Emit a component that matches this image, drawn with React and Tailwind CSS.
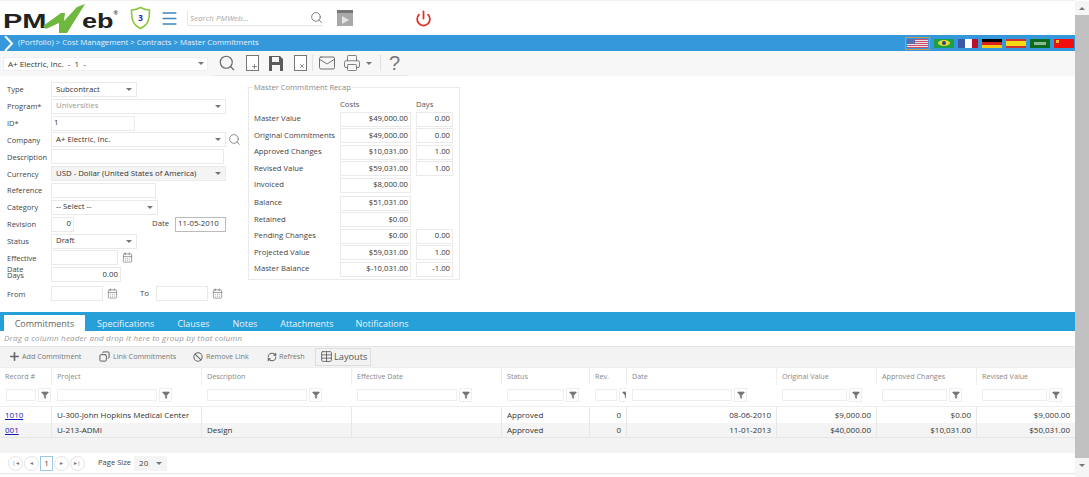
import { Search, Menu, Power, Plus, Filter, CalendarDays, X, RefreshCw, Ban, Table, Copy, Mail, Printer } from 'lucide-react'

const font = 'font-["Open_Sans","Noto_Sans",sans-serif]'

function Caret({ className = '' }) {
    return <span className={'inline-block border-x-[3px] border-t-[3px] border-x-transparent border-t-[#777] ' + className}></span>
}

function Select({ value, width, muted, bg = 'bg-white' }) {
    return (
        <div style={{ width }} className={'h-[15px] flex items-center justify-between pl-[4px] pr-[4px] border border-[#eaeaea] whitespace-nowrap ' + bg}>
            <span className={muted ? 'text-[#999]' : 'text-[#333]'}>{value}</span>
            <Caret className="shrink-0" />
        </div>
    )
}

function Input({ value, width, right, dark }) {
    return (
        <div style={{ width }} className={'h-[15px] flex items-center px-[2px] border ' + (dark ? 'border-[#bbb] ' : 'border-[#eaeaea] ') + (right ? 'justify-end' : '')}>
            <span className="text-[#333]">{value}</span>
        </div>
    )
}

function Row({ label, children }) {
    return (
        <div className="h-[16.85px] flex items-center">
            <div className="w-[51px] shrink-0 pl-[7px] text-[7.5px] leading-[6px] text-[#444]">{label}</div>
            {children}
        </div>
    )
}

function Cal() {
    return <CalendarDays size={11} strokeWidth={1.5} className="text-[#777]" />
}

function FormPanel() {
    return (
        <div className="w-[248px] shrink-0 pt-[5px] text-[7.8px]">
            <Row label="Type"><Select value="Subcontract" width={86} /></Row>
            <Row label="Program*"><Select value="Universities" width={175} muted /></Row>
            <Row label="ID*"><Input value="1" width={84} /></Row>
            <Row label="Company">
                <Select value="A+ Electric, Inc." width={175} />
                <Search size={13} strokeWidth={1.5} className="ml-[2px] text-[#777]" />
            </Row>
            <Row label="Description"><Input width={173} /></Row>
            <Row label="Currency"><Select value="USD - Dollar (United States of America)" width={175} bg="bg-[#f4f4f4]" /></Row>
            <Row label="Reference"><Input width={105} /></Row>
            <Row label="Category"><Select value="-- Select --" width={107} /></Row>
            <Row label="Revision">
                <Input value="0" width={23} right />
                <span className="ml-[78px] w-[23px] text-[#444]">Date</span>
                <Input value="11-05-2010" width={51} dark />
            </Row>
            <Row label="Status"><Select value="Draft" width={86} /></Row>
            <Row label="Effective">
                <Input width={67} />
                <span className="ml-[4px]"><Cal /></span>
            </Row>
            <Row label={<span className="block mb-[6px]">Date<br />Days</span>}><Input value="0.00" width={70} right /></Row>
            <div className="h-[2px]"></div>
            <Row label="From">
                <Input width={52} />
                <span className="ml-[4px]"><Cal /></span>
                <span className="ml-[22px] w-[16px] text-[#444]">To</span>
                <Input width={52} />
                <span className="ml-[4px]"><Cal /></span>
            </Row>
        </div>
    )
}

const recap = [
    ['Master Value', '$49,000.00', '0.00'],
    ['Original Commitments', '$49,000.00', '0.00'],
    ['Approved Changes', '$10,031.00', '1.00'],
    ['Revised Value', '$59,031.00', '1.00'],
    ['Invoiced', '$8,000.00', null, 'mb-[1.5px]'],
    ['Balance', '$51,031.00', null],
    ['Retained', '$0.00', null],
    ['Pending Changes', '$0.00', '0.00'],
    ['Projected Value', '$59,031.00', '1.00'],
    ['Master Balance', '$-10,031.00', '-1.00'],
]

function RecapPanel() {
    return (
        <div className="relative mt-[11px] w-[212px] h-[193px] border border-[#eaeaea] pl-[5px] pt-[11px] text-[7.7px]">
            <span className="absolute left-[4px] top-[-4px] bg-white px-[1px] text-[7.6px] text-[#888]">Master Commitment Recap</span>
            <div className="flex h-[12px] items-center text-[#555]">
                <span className="w-[86px]"></span>
                <span className="w-[76px]">Costs</span>
                <span>Days</span>
            </div>
            {recap.map((r, i) => (
                <div key={i} className={'flex h-[16.5px] items-center ' + (r[3] || '')}>
                    <span className="w-[86px] text-[#444] whitespace-nowrap">{r[0]}</span>
                    <Input value={r[1]} width={71} right />
                    {r[2] && <span className="ml-[5px]"><Input value={r[2]} width={37} right /></span>}
                </div>
            ))}
        </div>
    )
}

const cols = 'grid grid-cols-[51px_150px_150px_150px_88px_37px_150px_100px_100px_99px]'
const headers = ['Record #', 'Project', 'Description', 'Effective Date', 'Status', 'Rev.', 'Date', 'Original Value', 'Approved Changes', 'Revised Value']
const filterWidths = [30, 100, 100, 100, 57, 22, 100, 65, 65, 65]
const rows = [
    ['1010', 'U-300-John Hopkins Medical Center', '', '', 'Approved', '0', '08-06-2010', '$9,000.00', '$0.00', '$9,000.00'],
    ['001', 'U-213-ADMI', 'Design', '', 'Approved', '0', '11-01-2013', '$40,000.00', '$10,031.00', '$50,031.00'],
]

function Grid() {
    return (
        <div>
            <div className={cols + ' h-[18px] items-stretch border-t border-[#eee]'}>
                {headers.map((h) => (
                    <div key={h} className="pl-[5px] flex items-center text-[7.2px] text-[#888] border-l border-[#eee] first:border-l-0 whitespace-nowrap">{h}</div>
                ))}
            </div>
            <div className={cols + ' h-[22px] pb-[2px] border-b border-[#eee]'}>
                {filterWidths.map((w, i) => (
                    <div key={i} className="pl-[6px] flex items-center gap-[2px] overflow-hidden">
                        <div style={{ width: w }} className="h-[12px] border border-[#eee] shrink-0"></div>
                        <div className="w-[13px] h-[14px] border border-[#eee] flex items-center justify-center shrink-0">
                            <Filter size={8} fill="#777" className="text-[#777]" />
                        </div>
                    </div>
                ))}
            </div>
            {rows.map((r, ri) => (
                <div key={ri} className={cols + (ri === 0 ? ' h-[16px]' : ' h-[15px] bg-[#f4f4f4] border-b border-[#e6e6e6]')}>
                    {r.map((c, i) => (
                        <div key={i} className={'px-[5px] flex items-center whitespace-nowrap text-[#333] border-l border-[#e8e8e8] first:border-l-0 ' + (i >= 5 ? 'justify-end' : '')}>
                            {i === 0 ? <a className="text-[#1a1ab0] underline">{c}</a> : c}
                        </div>
                    ))}
                </div>
            ))}
            <div className="h-[15px] bg-[#f3f3f3]"></div>
        </div>
    )
}

function PageButton({ children }) {
    return <span className="w-[15px] h-[15px] rounded-full border border-[#e4e4e4] flex items-center justify-center text-[#777] text-[6px]">{children}</span>
}

function Pager() {
    return (
        <div className="h-[21px] flex items-center pl-[8px] border-b border-[#e6e6e6]">
            <PageButton>|◂</PageButton>
            <span className="ml-[1px]"><PageButton>◂</PageButton></span>
            <span className="mx-[1px] w-[13px] h-[15px] border border-[#9cc7e6] flex items-center justify-center text-[#444]">1</span>
            <PageButton>▸</PageButton>
            <span className="ml-[1px]"><PageButton>▸|</PageButton></span>
            <span className="ml-[13px] text-[7.6px] text-[#444]">Page Size</span>
            <div className="ml-[3px] w-[33px] h-[15px] bg-[#f4f4f4] flex items-center justify-between px-[5px] text-[#444]">
                20 <Caret />
            </div>
        </div>
    )
}

function GridToolbar() {
    return (
        <div className="h-[21px] flex items-center bg-[#f3f3f3] border-t border-[#e6e6e6] text-[#777] text-[7.2px] pl-[8px] pb-[1px]">
            <Plus size={13} strokeWidth={3} className="text-[#666]" />
            <span className="ml-[1px] w-[59px] whitespace-nowrap">Add Commitment</span>
            <Copy size={11} strokeWidth={2} className="ml-[18px] text-[#555] -scale-x-100" />
            <span className="ml-[3px] w-[61px] whitespace-nowrap">Link Commitments</span>
            <Ban size={10} strokeWidth={2.5} className="ml-[19px] text-[#666]" />
            <span className="ml-[3px] w-[42px] whitespace-nowrap">Remove Link</span>
            <RefreshCw size={10} strokeWidth={2.5} className="ml-[19px] text-[#666]" />
            <span className="ml-[2px] w-[24px] whitespace-nowrap">Refresh</span>
            <div className="ml-[12px] w-[56px] h-[18px] pl-[4px] flex items-center gap-[1px] border border-[#ddd] text-[9.2px] text-[#555]">
                <Table size={13} strokeWidth={1.5} className="text-[#555] shrink-0" />
                Layouts
            </div>
        </div>
    )
}

function Flag({ className = '', children }) {
    return <span className={'relative w-[20px] h-[9px] overflow-hidden shrink-0 ' + className}>{children}</span>
}

function Flags() {
    return (
        <div className="flex items-center gap-[4px] pr-[1px]">
            <span className="border border-[#c9974f] p-[1px] flex">
                <span className="w-[21px] h-[9px] bg-[repeating-linear-gradient(#c8506a_0,#c8506a_1px,#f2dfe3_1px,#f2dfe3_2px)] relative">
                    <span className="absolute left-0 top-0 w-[8px] h-[5px] bg-[#5a6fb0]"></span>
                </span>
            </span>
            <Flag className="bg-[#1f9e48] flex items-center justify-center">
                <span className="w-[12px] h-[6px] bg-[#e8d92a] rounded-[50%] flex items-center justify-center"><span className="w-[4px] h-[4px] rounded-full bg-[#27408b]"></span></span>
            </Flag>
            <Flag className="flex"><span className="w-[7px] bg-[#3a5aa8]"></span><span className="w-[7px] bg-white"></span><span className="w-[6px] bg-[#b8102e]"></span></Flag>
            <Flag className="flex flex-col"><span className="h-[3px] bg-black"></span><span className="h-[3px] bg-[#d8201c]"></span><span className="h-[3px] bg-[#f4c810]"></span></Flag>
            <Flag className="flex flex-col"><span className="h-[2px] bg-[#d0312d]"></span><span className="h-[5px] bg-[#f5d915]"></span><span className="h-[2px] bg-[#d0312d]"></span></Flag>
            <Flag className="bg-[#0d6b20] flex items-center justify-center"><span className="w-[12px] h-[3px] bg-[#8cb894]"></span></Flag>
            <Flag className="bg-[#f00e0e]"><span className="absolute left-[2px] top-[1px] w-[3px] h-[3px] bg-[#f0c020]"></span></Flag>
        </div>
    )
}

function Logo() {
    return (
        <div className="relative w-[116px] h-[32px] mt-[2px] ml-[3px] font-['Liberation_Sans'] font-bold text-[#222] text-[20px] leading-[20px]">
            <span className="absolute left-0 top-[8px] origin-left scale-x-[1.45]">PM</span>
            <span className="absolute left-[79px] top-[8px] origin-left scale-x-[1.35]">eb</span>
            <svg className="absolute left-[39px] top-[1px]" width="44" height="30" viewBox="0 0 44 30">
                <path d="M1 22 L19 9 L23 9 L22 17 L35 3 L43 0 L35 13 L25 29 L17 29 L17 19 L4 25 Z" fill="#6fb83f" />
            </svg>
            <span className="absolute right-[1px] top-[7px] text-[6px] leading-[6px] text-[#333]">®</span>
        </div>
    )
}

function TopBar() {
    return (
        <div className="h-[35px] flex items-center border-t border-[#f2f2f2]">
            <Logo />
            <div className="ml-[11px] relative w-[21px] h-[24px]">
                <svg width="21" height="24" viewBox="0 0 21 24">
                    <path d="M10.5 1.5 C7 3.5 4.5 4 1.5 4 C1.5 14 3 19 10.5 22.5 C18 19 19.5 14 19.5 4 C16.5 4 14 3.5 10.5 1.5 Z" fill="white" stroke="#8dc63f" strokeWidth="1.6" />
                </svg>
                <span className="absolute inset-0 flex items-center justify-center text-[8px] font-bold text-[#2222cc]">3</span>
            </div>
            <Menu size={19} strokeWidth={2} className="ml-[9px] text-[#3a86c0]" />
            <div className="ml-[8px] w-[136px] h-[15px] border-b border-l border-[#e6e6e6] flex items-center justify-between pl-[2px] italic text-[#aaa]">
                Search PMWeb...
                <Search size={13} strokeWidth={1.5} className="text-[#666]" />
            </div>
            <div className="ml-[14px] w-[16px] h-[16px] bg-[#a9a9a9] flex items-center justify-center border-t-[3px] border-[#777]">
                <span className="border-y-[4px] border-l-[7px] border-y-transparent border-l-[#e4e4e4]"></span>
            </div>
            <Power size={17} strokeWidth={2.5} className="ml-[62px] text-[#d9302a]" />
        </div>
    )
}

function ActionBar() {
    return (
        <div className="h-[25px] bg-[#f7f7f7] flex items-center pl-[3px]">
            <div className="w-[205px] h-[14px] bg-white border border-[#efefef] flex items-center justify-between pl-[4px] pr-[3px] text-[#333]">
                <span>A+ Electric, Inc.&nbsp; -&nbsp; 1&nbsp; -</span>
                <Caret />
            </div>
            <div className="ml-[5px] w-[194px] h-[25px] border-b border-[#e8e8e8] flex items-center pl-[5px] text-[#666]">
                <Search size={18} strokeWidth={1.5} />
                <span className="ml-[10px] relative w-[13px] h-[16px] border border-[#777] bg-white"><Plus size={7} strokeWidth={2.5} className="absolute right-0 bottom-0" /></span>
                <svg className="ml-[10px]" width="14" height="15" viewBox="0 0 14 15"><path d="M0 0H11L14 3V15H0Z M3 1V6H10V1Z M3 9V15H11V9Z" fill="#5c5c5c" fillRule="evenodd" /></svg>
                <span className="ml-[11px] relative w-[13px] h-[16px] border border-[#777] bg-white"><X size={6} strokeWidth={3} className="absolute right-[1px] bottom-[1px]" /></span>
                <span className="ml-[5px] mr-[5px] w-px h-[16px] bg-[#e2e2e2]"></span>
                <Mail size={18} strokeWidth={1.25} className="text-[#666]" />
                <Printer size={18} strokeWidth={1.25} className="ml-[7px] text-[#777]" />
                <span className="ml-[5px] flex"><Caret /></span>
                <span className="ml-[8px] mr-[8px] w-px h-[16px] bg-[#e2e2e2]"></span>
                <span className="font-['Liberation_Sans'] text-[20px] leading-[20px] text-[#777]">?</span>
            </div>
        </div>
    )
}

function Tabs() {
    const tabs = ['Specifications', 'Clauses', 'Notes', 'Attachments', 'Notifications']
    const gaps = ['ml-[12px]', 'ml-[23px]', 'ml-[23px]', 'ml-[23px]', 'ml-[22px]']
    return (
        <div className="h-[19px] mt-[1px] bg-[#279fd9] flex items-end pl-[4px] text-[9px]">
            <div className="w-[81px] h-[16px] bg-white text-[#666] flex items-center justify-center">Commitments</div>
            {tabs.map((t, i) => (
                <div key={t} className={'h-[16px] flex items-center text-[#e8f5fc] ' + gaps[i]}>{t}</div>
            ))}
        </div>
    )
}

export default function App() {
    return (
        <div className={'w-[1089px] h-[477px] overflow-hidden flex bg-white text-[8px] leading-none ' + font}>
            <div className="w-[1075px] shrink-0 flex flex-col">
                <TopBar />
                <div className="h-[16px] bg-[#3498db] flex items-center justify-between">
                    <div className="flex items-center">
                        <svg className="ml-[4px]" width="10" height="15" viewBox="0 0 10 15"><path d="M1 0 L8 7.5 L1 15" fill="none" stroke="white" strokeWidth="2" /></svg>
                        <span className="ml-[4px] text-[7.77px] text-[#e6f2fb]">(Portfolio) &gt; Cost Management &gt; Contracts &gt; Master Commitments</span>
                    </div>
                    <Flags />
                </div>
                <ActionBar />
                <div className="h-[235px] flex items-start">
                    <FormPanel />
                    <RecapPanel />
                </div>
                <Tabs />
                <div className="h-[15px] flex items-center pl-[4px] pb-[1px] italic tracking-[0.2px] text-[#999]">Drag a column header and drop it here to group by that column</div>
                <GridToolbar />
                <Grid />
                <Pager />
            </div>
            <div className="w-[14px] mt-[1px] flex flex-col bg-[#f5f5f5]">
                <div className="h-[14px] flex items-center justify-center"><Caret className="rotate-180" /></div>
                <div className="h-[443px] bg-[#c1c1c1]"></div>
                <div className="h-[14px] flex items-center justify-center"><Caret /></div>
            </div>
        </div>
    )
}
